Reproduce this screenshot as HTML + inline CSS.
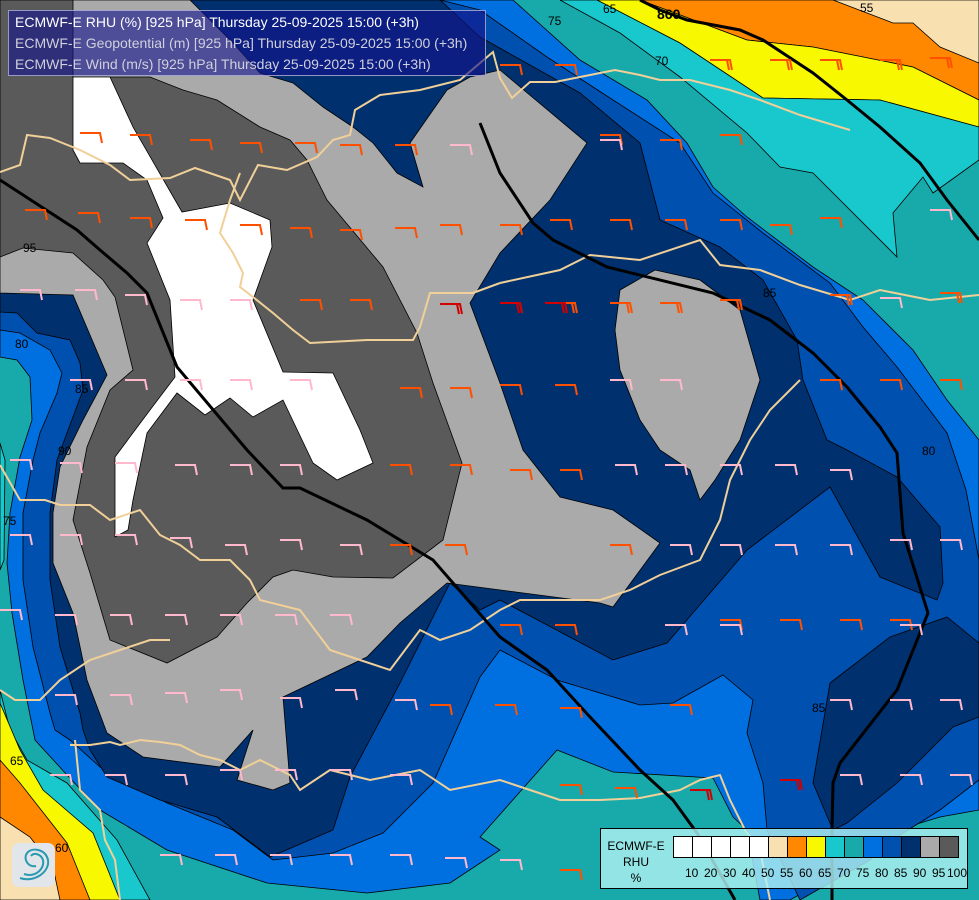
<!DOCTYPE html>
<html><head><meta charset="utf-8"><style>
body{margin:0;width:979px;height:900px;overflow:hidden;background:#18aaaa;font-family:"Liberation Sans",sans-serif}
svg{position:absolute;left:0;top:0}
.t{position:absolute;left:8px;top:10px;width:478px;height:66px;background:rgba(20,20,140,0.62);border:1px solid rgba(200,200,230,0.7);font-size:14px;line-height:21px;color:#d0d0dc;padding:1px 0 0 6px;box-sizing:border-box;white-space:nowrap}
.t div:first-child{color:#fff}
.lg{position:absolute;left:600px;top:828px;width:368px;height:61px;background:rgba(175,240,242,0.82);border:1px solid #000;box-sizing:border-box}
.lt{position:absolute;font-size:12px;color:#000;text-align:center}
.sw{position:absolute;top:7px;height:22px;border:1px solid #000;box-sizing:border-box}
.nm{position:absolute;top:37px;font-size:12px;color:#000}
</style></head><body>
<svg width="979" height="900" viewBox="0 0 979 900">
<defs>
<g id="bo"><path d="M0,0 L20,0 L22,10" fill="none" stroke="#ff5000" stroke-width="2"/></g>
<g id="bo2"><path d="M0,0 L20,0 L22,10 M17,0 L19,10" fill="none" stroke="#ff5000" stroke-width="2"/></g>
<g id="bp"><path d="M0,0 L20,0 L22,10" fill="none" stroke="#ffb8cc" stroke-width="2"/></g>
<g id="br"><path d="M0,0 L20,0 L22,10 M17,0 L19,10" fill="none" stroke="#d00000" stroke-width="2"/></g>
</defs>
<g stroke="#000" stroke-width="0.8">
<polygon fill="#f8e0b0" points="800,0 979,0 979,100 913,67 813,47 747,40 640,0"/>
<polygon fill="#ff8800" points="620,0 833,0 893,23 913,23 940,47 979,63 979,100 913,67 813,47 747,40 640,0"/>
<polygon fill="#f8f800" points="597,0 640,0 747,40 813,47 913,67 979,100 979,127 880,100 763,98 680,43"/>
<polygon fill="#18c8cc" points="560,0 597,0 680,43 763,98 880,100 979,127 979,160 933,193 923,177 893,213 897,257 813,173 780,167 747,133 680,77 620,33"/>
<polygon fill="#18c8cc" points="0,690 10,730 27,760 67,783 117,840 150,900 0,900"/>
<polygon fill="#f8f800" points="0,703 20,750 43,790 93,833 120,900 0,900"/>
<polygon fill="#ff8800" points="0,760 20,783 67,843 90,900 0,900"/>
<polygon fill="#f8e0b0" points="0,817 30,837 53,867 60,900 0,900"/>
<polygon fill="#18c8cc" points="0,443 5,460 4,560 0,570"/>
<!-- blue 75-80 -->
<polygon fill="#0070e0" points="440,0 513,0 580,60 647,100 687,143 713,187 747,217 813,267 863,300 913,350 947,400 979,440 979,810 940,817 897,830 860,860 790,900 760,900 747,830 733,817 713,778 613,772 557,750 480,837 500,850 450,883 367,893 267,883 167,850 100,810 67,775 35,740 23,680 12,613 7,563 10,513 20,457 32,420 30,377 17,360 0,357 0,330"/>
<!-- blue 80-85 -->
<polygon fill="#0050b0" points="380,0 440,0 480,10 547,57 613,100 680,143 713,193 763,233 830,283 863,327 897,367 947,433 966,490 979,560 979,780 940,810 900,835 870,860 800,900 767,830 763,783 747,733 753,700 723,675 673,703 640,705 557,680 500,650 480,677 433,783 383,833 333,853 273,860 233,830 167,803 100,767 70,740 55,730 50,713 33,647 23,580 23,513 33,460 40,433 57,393 62,373 50,350 20,333 0,330 0,300"/>
<!-- navy -->
<polygon fill="#00306e" points="180,0 440,0 480,37 580,93 640,143 660,220 720,247 763,280 797,340 803,380 827,440 847,450 897,477 940,527 943,583 937,600 880,577 830,487 747,550 667,643 613,660 500,600 480,610 450,583 400,683 350,777 333,830 270,857 217,817 160,800 107,777 90,750 83,730 80,713 60,647 50,580 50,513 57,460 67,433 83,390 80,363 70,340 37,333 17,313 0,312 0,280"/>
<polygon fill="#00306e" points="813,783 830,683 890,637 947,617 979,643 979,717 953,727 897,783 847,823 833,830"/>
<!-- light gray -->
<polygon fill="#aaaaaa" points="0,0 190,0 233,43 260,73 293,83 323,107 353,127 373,143 397,173 423,187 410,143 447,90 470,77 500,70 587,143 550,200 500,253 470,303 500,383 523,450 560,497 613,510 660,543 613,607 600,603 447,583 400,623 367,657 283,697 290,783 273,790 237,780 253,730 220,767 143,757 107,733 87,680 73,613 53,563 53,513 60,467 83,420 107,375 73,295 0,293"/>
<polygon fill="#aaaaaa" points="620,290 655,270 700,280 740,310 760,380 740,440 715,480 700,500 690,470 660,450 640,420 620,370 615,330"/>
<!-- dark gray -->
<polygon fill="#5a5a5a" points="0,0 73,0 73,77 150,77 183,90 217,100 260,127 290,140 307,160 327,200 383,267 417,333 433,383 462,463 443,540 393,578 333,577 293,570 273,577 247,603 217,637 167,663 110,640 90,573 73,520 87,447 110,390 133,370 115,297 103,280 73,253 23,248 0,257"/>
<!-- white -->
<polygon fill="#ffffff" points="73,77 110,77 133,127 182,212 230,203 270,220 272,247 253,300 283,372 333,373 360,430 373,463 337,480 313,463 283,400 253,417 230,398 205,415 177,393 147,433 133,500 128,530 115,537 115,457 150,410 175,377 170,300 147,243 163,218 147,180 123,163 80,163 73,150"/>
</g>
<g fill="none" stroke="#f0d098" stroke-width="2">
<polyline points="0,172 20,165 27,135 50,138 80,150 110,165 130,180 170,178 195,168 230,180 240,200 258,165 287,170 317,157 333,140 350,135 355,110 380,95 420,90 460,80 493,52 500,78 512,98 530,82 555,82 590,75 615,70 640,75 660,80 690,80 730,90 760,100 800,115 850,130"/>
<polyline points="500,283 473,293 430,293 420,327 413,340 367,340 310,343 293,330 273,313 253,297 240,287 243,273 233,253 220,233 230,200 240,173"/>
<polyline points="500,283 560,270 590,255 640,260 700,240 720,265 760,270 800,285 850,300 880,290 930,300 979,295"/>
<polyline points="0,465 20,500 45,500 60,505 90,505 110,520 140,510 160,535 180,545 200,560 230,560 250,580 260,600 300,610 330,650 360,660 390,670 420,630 440,640 470,630 500,610 520,600 560,600 600,600 630,590 660,575 700,560 720,520 730,480 750,440 770,410 790,390 800,380"/>
<polyline points="0,690 15,700 40,700 60,680 90,660 120,650 150,640 170,640"/>
<polyline points="70,745 90,745 110,742 120,745 140,740 160,742 180,745 200,755 220,760 240,770 260,760 290,775 300,790 330,770 370,780 420,770 450,790 500,780 530,790 560,800 600,800 640,798 680,790 700,780 720,775 730,800 745,830 760,850 770,900"/>
<polyline points="75,740 80,790 100,810 105,840 115,860 120,900"/>
</g>
<g fill="none" stroke="#000" stroke-width="3">
<polyline points="0,180 77,230 100,250 127,273 147,293 177,367 247,450 283,488 300,488 367,520 433,560 500,637 547,670 590,717 640,770 673,800 697,833 735,900"/>
<polyline points="640,0 660,10 687,20 740,30 763,40 813,73 847,100 880,127 920,163 947,200 979,240"/>
<polyline points="480,123 500,173 533,223 553,240 607,267 713,293 770,320 813,353 847,387 880,427 897,453 903,533 928,613 897,690 840,763 833,783 832,830 832,900"/>
</g>
<g font-size="12" fill="#000" font-family="Liberation Sans">
<text x="23" y="252">95</text><text x="15" y="348">80</text><text x="75" y="393">85</text><text x="58" y="455">90</text>
<text x="3" y="525">75</text><text x="10" y="765">65</text><text x="55" y="852">60</text>
<text x="548" y="25">75</text><text x="655" y="65">70</text><text x="603" y="13">65</text><text x="860" y="12">55</text>
<text x="657" y="19" font-size="14" font-weight="bold">860</text><text x="763" y="297">85</text><text x="922" y="455">80</text><text x="812" y="712">85</text>
</g>
<g>
<use href="#bo" x="80" y="133"/><use href="#bo" x="130" y="135"/><use href="#bo" x="190" y="140"/><use href="#bo" x="240" y="143"/><use href="#bo" x="295" y="143"/><use href="#bo" x="340" y="145"/><use href="#bo" x="395" y="145"/><use href="#bo" x="500" y="65"/><use href="#bo" x="555" y="65"/><use href="#bo" x="600" y="135"/><use href="#bo" x="660" y="140"/><use href="#bo" x="720" y="135"/><use href="#bo2" x="770" y="60"/><use href="#bo2" x="820" y="60"/><use href="#bo2" x="880" y="60"/><use href="#bo2" x="930" y="58"/><use href="#bo2" x="710" y="60"/>
<use href="#bo" x="25" y="210"/><use href="#bo" x="78" y="213"/><use href="#bo" x="130" y="218"/><use href="#bo" x="185" y="220"/><use href="#bo" x="240" y="225"/><use href="#bo" x="290" y="228"/><use href="#bo" x="340" y="230"/><use href="#bo" x="395" y="228"/><use href="#bo" x="440" y="225"/><use href="#bo" x="500" y="225"/><use href="#bo" x="550" y="220"/><use href="#bo" x="610" y="220"/><use href="#bo" x="665" y="220"/><use href="#bo" x="720" y="220"/><use href="#bo" x="770" y="225"/><use href="#bo" x="820" y="218"/>
<use href="#bo" x="500" y="303"/><use href="#bo2" x="555" y="303"/><use href="#bo2" x="610" y="303"/><use href="#bo2" x="660" y="303"/><use href="#bo2" x="720" y="300"/><use href="#bo2" x="830" y="295"/><use href="#bo2" x="940" y="293"/><use href="#br" x="440" y="304"/><use href="#br" x="545" y="303"/><use href="#br" x="500" y="303"/>
<use href="#bo" x="300" y="300"/><use href="#bo" x="350" y="300"/><use href="#bo" x="400" y="388"/><use href="#bo" x="450" y="388"/><use href="#bo" x="500" y="385"/><use href="#bo" x="555" y="385"/><use href="#bo" x="390" y="465"/><use href="#bo" x="450" y="465"/><use href="#bo" x="510" y="470"/><use href="#bo" x="560" y="470"/><use href="#bo" x="820" y="380"/><use href="#bo" x="880" y="380"/><use href="#bo" x="940" y="380"/>
<use href="#bo" x="390" y="545"/><use href="#bo" x="445" y="545"/><use href="#bo" x="500" y="625"/><use href="#bo" x="555" y="625"/><use href="#bo" x="610" y="545"/><use href="#bo" x="780" y="620"/><use href="#bo" x="840" y="620"/><use href="#bo" x="890" y="620"/><use href="#bo" x="430" y="705"/><use href="#bo" x="495" y="705"/><use href="#bo" x="560" y="708"/><use href="#bo" x="670" y="705"/><use href="#bo" x="720" y="620"/><use href="#bo" x="560" y="785"/><use href="#bo" x="615" y="788"/><use href="#br" x="690" y="790"/><use href="#br" x="780" y="780"/><use href="#bo" x="560" y="870"/>
<use href="#bp" x="20" y="290"/><use href="#bp" x="75" y="290"/><use href="#bp" x="125" y="295"/><use href="#bp" x="180" y="300"/><use href="#bp" x="230" y="300"/><use href="#bp" x="450" y="145"/><use href="#bp" x="600" y="140"/><use href="#bp" x="930" y="210"/><use href="#bp" x="880" y="298"/>
<use href="#bp" x="70" y="380"/><use href="#bp" x="125" y="380"/><use href="#bp" x="180" y="380"/><use href="#bp" x="230" y="380"/><use href="#bp" x="290" y="380"/><use href="#bp" x="610" y="380"/><use href="#bp" x="660" y="380"/>
<use href="#bp" x="10" y="460"/><use href="#bp" x="60" y="463"/><use href="#bp" x="115" y="463"/><use href="#bp" x="175" y="465"/><use href="#bp" x="230" y="465"/><use href="#bp" x="280" y="465"/><use href="#bp" x="615" y="465"/><use href="#bp" x="665" y="465"/><use href="#bp" x="720" y="465"/><use href="#bp" x="775" y="465"/><use href="#bp" x="830" y="470"/>
<use href="#bp" x="10" y="535"/><use href="#bp" x="60" y="535"/><use href="#bp" x="115" y="535"/><use href="#bp" x="170" y="538"/><use href="#bp" x="225" y="545"/><use href="#bp" x="280" y="540"/><use href="#bp" x="340" y="545"/><use href="#bp" x="670" y="545"/><use href="#bp" x="720" y="545"/><use href="#bp" x="775" y="545"/><use href="#bp" x="830" y="545"/><use href="#bp" x="890" y="540"/><use href="#bp" x="940" y="540"/>
<use href="#bp" x="0" y="610"/><use href="#bp" x="55" y="615"/><use href="#bp" x="110" y="615"/><use href="#bp" x="165" y="615"/><use href="#bp" x="220" y="615"/><use href="#bp" x="275" y="615"/><use href="#bp" x="330" y="615"/><use href="#bp" x="665" y="625"/><use href="#bp" x="720" y="625"/><use href="#bp" x="900" y="625"/>
<use href="#bp" x="55" y="695"/><use href="#bp" x="110" y="695"/><use href="#bp" x="165" y="693"/><use href="#bp" x="220" y="690"/><use href="#bp" x="280" y="698"/><use href="#bp" x="335" y="690"/><use href="#bp" x="395" y="700"/><use href="#bp" x="830" y="700"/><use href="#bp" x="890" y="700"/><use href="#bp" x="940" y="700"/>
<use href="#bp" x="50" y="775"/><use href="#bp" x="105" y="775"/><use href="#bp" x="165" y="775"/><use href="#bp" x="220" y="770"/><use href="#bp" x="275" y="770"/><use href="#bp" x="330" y="770"/><use href="#bp" x="390" y="775"/><use href="#bp" x="840" y="775"/><use href="#bp" x="900" y="775"/><use href="#bp" x="950" y="775"/>
<use href="#bp" x="160" y="855"/><use href="#bp" x="215" y="855"/><use href="#bp" x="270" y="855"/><use href="#bp" x="330" y="855"/><use href="#bp" x="390" y="855"/><use href="#bp" x="445" y="858"/><use href="#bp" x="500" y="860"/>
</g>
<rect x="12" y="843" width="43" height="44" rx="7" fill="#e2e6ea"/>
<g fill="none" stroke="#2a9ab0" stroke-width="2">
<path d="M20,878 C34,883 50,872 48,860 C46,850 34,847 28,852 C22,858 28,868 36,866"/>
<path d="M24,874 C36,878 45,868 43,860 C41,854 34,852 31,856"/>
</g>
</svg>
<div class="t"><div>ECMWF-E RHU (%) [925 hPa] Thursday 25-09-2025 15:00 (+3h)</div><div>ECMWF-E Geopotential (m) [925 hPa] Thursday 25-09-2025 15:00 (+3h)</div><div>ECMWF-E Wind (m/s) [925 hPa] Thursday 25-09-2025 15:00 (+3h)</div></div>
<div class="lg">
<div class="lt" style="left:4px;top:9px;width:62px;line-height:16px">ECMWF-E<br>RHU<br>%</div>
<div class="sw" style="left:72px;width:20px;background:#fff"></div>
<div class="sw" style="left:91px;width:20px;background:#fff"></div>
<div class="sw" style="left:110px;width:20px;background:#fff"></div>
<div class="sw" style="left:129px;width:20px;background:#fff"></div>
<div class="sw" style="left:148px;width:20px;background:#fff"></div>
<div class="sw" style="left:167px;width:20px;background:#f8e0b0"></div>
<div class="sw" style="left:186px;width:20px;background:#ff8800"></div>
<div class="sw" style="left:205px;width:20px;background:#f8f800"></div>
<div class="sw" style="left:224px;width:20px;background:#18c8cc"></div>
<div class="sw" style="left:243px;width:20px;background:#18aaaa"></div>
<div class="sw" style="left:262px;width:20px;background:#0070e0"></div>
<div class="sw" style="left:281px;width:20px;background:#0050b0"></div>
<div class="sw" style="left:300px;width:20px;background:#00306e"></div>
<div class="sw" style="left:319px;width:20px;background:#aaaaaa"></div>
<div class="sw" style="left:338px;width:20px;background:#5a5a5a"></div>
<div class="nm" style="left:84px">10</div><div class="nm" style="left:103px">20</div><div class="nm" style="left:122px">30</div><div class="nm" style="left:141px">40</div><div class="nm" style="left:160px">50</div><div class="nm" style="left:179px">55</div><div class="nm" style="left:198px">60</div><div class="nm" style="left:217px">65</div><div class="nm" style="left:236px">70</div><div class="nm" style="left:255px">75</div><div class="nm" style="left:274px">80</div><div class="nm" style="left:293px">85</div><div class="nm" style="left:312px">90</div><div class="nm" style="left:331px">95</div><div class="nm" style="left:346px">100</div>
</div>
</body></html>
